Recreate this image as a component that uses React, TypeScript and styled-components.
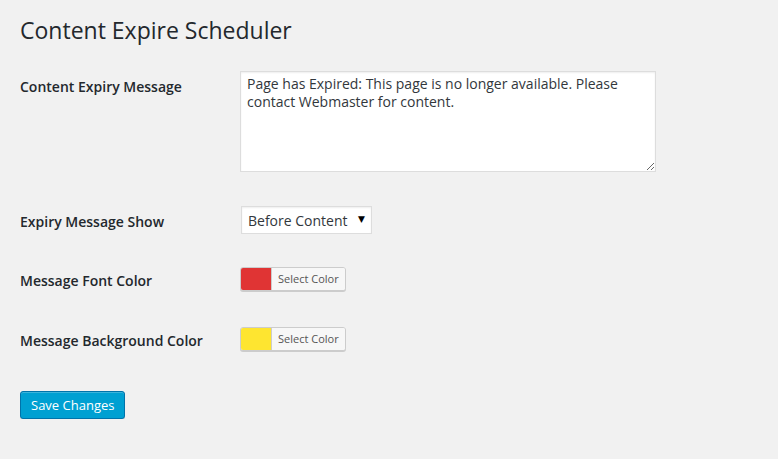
import React from "react";
import styled, { createGlobalStyle } from "styled-components";

const Global = createGlobalStyle`
  html, body { margin: 0; padding: 0; background: #f1f1f1; }
  body { font-family: "Open Sans", "Noto Sans", sans-serif; font-size: 13px; color: #23282d; }
`;

const Wrap = styled.div`
  padding: 0 20px;
`;

const Title = styled.h1`
  margin: 16px 0 0;
  font-size: 23px;
  font-weight: 400;
  line-height: 29px;
  color: #23282d;
`;

const Form = styled.form`
  margin-top: 11px;
  display: flex;
  flex-direction: column;
`;

const Row = styled.div`
  display: flex;
  align-items: flex-start;
`;

const Label = styled.label<{ $offset?: number }>`
  width: 200px;
  flex: none;
  padding: ${(p) => 20 + (p.$offset ?? 0)}px 10px ${(p) => 22 - (p.$offset ?? 0)}px 0;
  font-size: 14px;
  font-weight: 600;
  line-height: 1.3;
  color: #23282d;
`;

const Field = styled.div`
  padding: 15px 10px;
`;

const TextArea = styled.textarea`
  display: block;
  box-sizing: border-box;
  width: 416px;
  height: 101px;
  margin: 0 0 5px;
  padding: 3px 6px;
  border: 1px solid #ddd;
  background: #fff;
  box-shadow: inset 0 1px 2px rgba(0, 0, 0, 0.07);
  font-family: "Open Sans", "Noto Sans", sans-serif;
  font-size: 14px;
  line-height: 18px;
  color: #32373c;
  resize: vertical;
  outline: none;
`;

const SelectBox = styled.div`
  position: relative;
  box-sizing: border-box;
  width: 131px;
  height: 28px;
  margin: -1px 0 0 1px;
  border: 1px solid #ddd;
  background: #fff;
  box-shadow: inset 0 1px 2px rgba(0, 0, 0, 0.07);
`;

const Select = styled.select`
  appearance: none;
  -webkit-appearance: none;
  border: none;
  background: transparent;
  width: 100%;
  height: 100%;
  padding: 0 0 0 6px;
  font-family: "Open Sans", "Noto Sans", sans-serif;
  font-size: 14px;
  color: #32373c;
  outline: none;
`;

const Arrow = styled.span`
  position: absolute;
  right: 6px;
  top: 6px;
  font-size: 9px;
  line-height: 12px;
  color: #000;
  pointer-events: none;
  font-family: "DejaVu Sans", sans-serif;
`;

const Picker = styled.button`
  display: inline-flex;
  align-items: stretch;
  box-sizing: border-box;
  height: 24px;
  padding: 0;
  border: 1px solid #ccc;
  border-radius: 3px;
  overflow: hidden;
  background: #f7f7f7;
  box-shadow: 0 1px 0 #ccc;
  cursor: pointer;
`;

const Swatch = styled.span<{ $color: string }>`
  width: 30px;
  background: ${(p) => p.$color};
`;

const PickerText = styled.span`
  border-left: 1px solid #ccc;
  padding: 0 6px;
  line-height: 22px;
  font-family: "Open Sans", "Noto Sans", sans-serif;
  font-size: 11px;
  color: #555;
  background: #f7f7f7;
`;

const Submit = styled.div`
  margin-top: 18px;
`;

const Primary = styled.button`
  box-sizing: border-box;
  height: 28px;
  padding: 0 10px;
  border: 1px solid #0073aa;
  border-radius: 3px;
  background: #00a0d2;
  box-shadow: inset 0 1px 0 rgba(120, 200, 230, 0.5), 0 1px 0 rgba(0, 0, 0, 0.15);
  color: #fff;
  font-family: "Open Sans", "Noto Sans", sans-serif;
  font-size: 13px;
  line-height: 26px;
  cursor: pointer;
`;

export default function App() {
  return (
    <>
      <Global />
      <Wrap>
        <Title>Content Expire Scheduler</Title>
        <Form onSubmit={(e) => e.preventDefault()}>
          <Row>
            <Label $offset={2}>Content Expiry Message</Label>
            <Field>
              <TextArea defaultValue="Page has Expired: This page is no longer available. Please contact Webmaster for content." />
            </Field>
          </Row>
          <Row>
            <Label $offset={1}>Expiry Message Show</Label>
            <Field>
              <SelectBox>
                <Select defaultValue="before">
                  <option value="before">Before Content</option>
                  <option value="after">After Content</option>
                </Select>
                <Arrow>▼</Arrow>
              </SelectBox>
            </Field>
          </Row>
          <Row>
            <Label>Message Font Color</Label>
            <Field>
              <Picker type="button">
                <Swatch $color="#e03434" />
                <PickerText>Select Color</PickerText>
              </Picker>
            </Field>
          </Row>
          <Row>
            <Label>Message Background Color</Label>
            <Field>
              <Picker type="button">
                <Swatch $color="#fee530" />
                <PickerText>Select Color</PickerText>
              </Picker>
            </Field>
          </Row>
          <Submit>
            <Primary type="submit">Save Changes</Primary>
          </Submit>
        </Form>
      </Wrap>
    </>
  );
}
